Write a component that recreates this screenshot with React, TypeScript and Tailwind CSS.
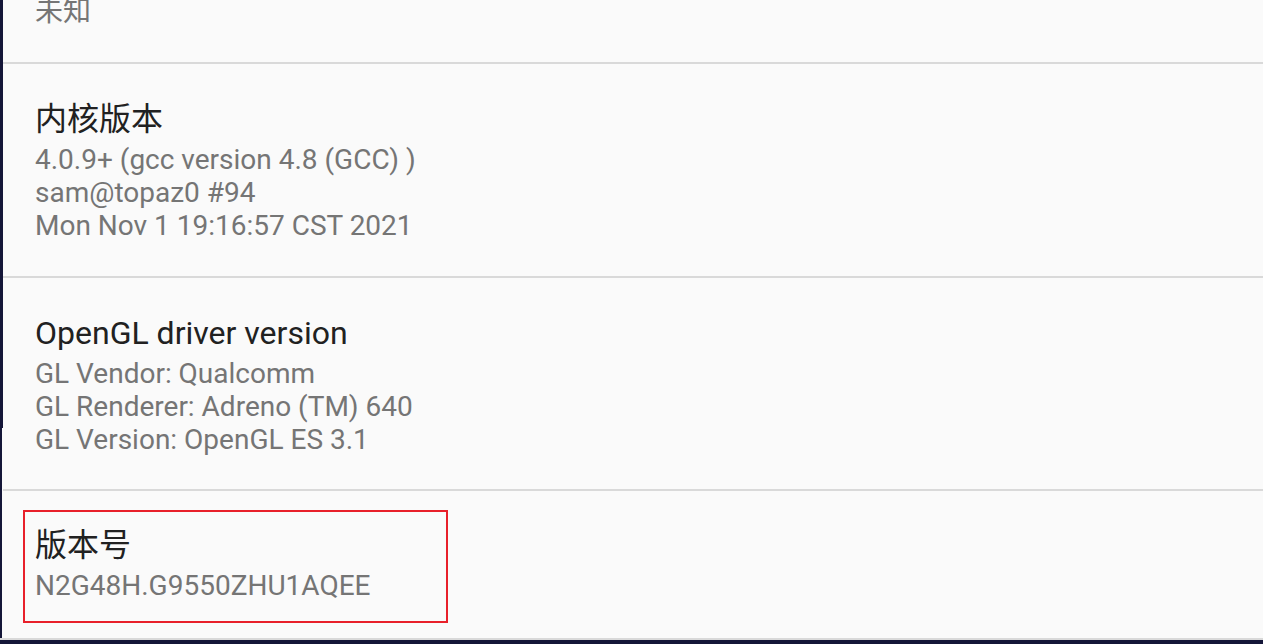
const font = { fontFamily: 'Roboto, "Noto Sans CJK SC", sans-serif' };

type Item = { title: string; lines: string[]; marked?: boolean };

const items: Item[] = [
  {
    title: '内核版本',
    lines: ['4.0.9+ (gcc version 4.8 (GCC) )', 'sam@topaz0 #94', 'Mon Nov 1 19:16:57 CST 2021'],
  },
  {
    title: 'OpenGL driver version',
    lines: ['GL Vendor: Qualcomm', 'GL Renderer: Adreno (TM) 640', 'GL Version: OpenGL ES 3.1'],
  },
  { title: '版本号', lines: ['N2G48H.G9550ZHU1AQEE'], marked: true },
];

function Row({ item }: { item: Item }) {
  const body = (
    <>
      <div className="text-[32px] leading-[48px] text-[#212121]">{item.title}</div>
      {item.lines.map((l) => (
        <div key={l} className="text-[28px] leading-[33px] text-[#757575]">
          {l}
        </div>
      ))}
    </>
  );

  if (item.marked) {
    // 红框标注
    return (
      <div className="border-t-2 border-[#d9d9d9] pt-[19px] pl-[20px]">
        <div className="w-[425px] h-[113px] border-2 border-[#e8202a] pl-[10px] pt-[9px]">{body}</div>
      </div>
    );
  }

  return <div className="border-t-2 border-[#d9d9d9] pl-[32px] pt-[31px] pb-[33.5px]">{body}</div>;
}

export default function App() {
  return (
    <div className="w-[1263px] h-[644px] flex flex-col overflow-hidden bg-[#fafafa]" style={font}>
      <div className="flex flex-1 min-h-0">
        {/* 左边深色边 */}
        <div className="flex flex-col shrink-0">
          <div className="w-[3px] h-[428px] bg-[#141638]" />
          <div className="w-[2px] flex-1 bg-[#141638]" />
        </div>
        <div className="flex-1 flex flex-col">
          <div className="h-[62px] pl-[32px] overflow-hidden">
            <div className="text-[28px] leading-[32px] text-[#757575] -mt-[4px]">未知</div>
          </div>
          {items.map((it) => (
            <Row key={it.title} item={it} />
          ))}
          <div className="flex-1" />
        </div>
      </div>
      <div className="h-[2px] bg-[#d9d9d9]" />
      <div className="h-[4px] bg-[#141638]" />
    </div>
  );
}
